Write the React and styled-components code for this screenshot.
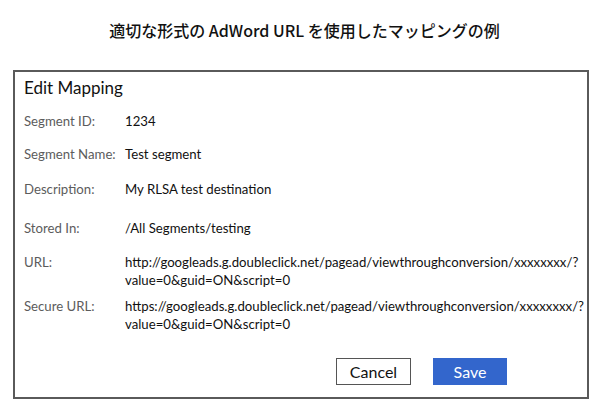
import styled, { createGlobalStyle } from "styled-components";

const GlobalStyle = createGlobalStyle`
	html, body {
		margin: 0;
		padding: 0;
		background: #fff;
	}
	body {
		font-family: Lato, "Noto Sans", "Noto Sans CJK JP", sans-serif;
		color: #1a1a1a;
	}
`;

const Page = styled.div`
	width: 605px;
	height: 414px;
	display: flex;
	flex-direction: column;
	align-items: flex-start;
`;

const Caption = styled.h1`
	align-self: stretch;
	margin: 19px 0 0;
	height: 22px;
	line-height: 22px;
	text-align: center;
	font-family: "Noto Sans CJK JP", "Noto Sans", sans-serif;
	font-weight: 500;
	font-size: 16px;
	color: #111;
	padding-left: 4px;
`;

const Dialog = styled.section`
	box-sizing: border-box;
	margin: 29px 0 0 13px;
	width: 576px;
	height: 329px;
	border: 2px solid #5a5a5a;
	padding: 5px 0 0 9px;
	display: flex;
	flex-direction: column;
`;

const Heading = styled.h2`
	margin: 0;
	height: 22px;
	line-height: 22px;
	font-size: 17px;
	font-weight: 400;
	color: #111;
`;

const Fields = styled.dl`
	margin: 13px 0 0;
	display: flex;
	flex-direction: column;
`;

const Row = styled.div`
	display: grid;
	grid-template-columns: 101px 1fr;
	margin-top: ${(p) => p.$gap || 0}px;
	line-height: 18px;
`;

const Label = styled.dt`
	font-size: 13.2px;
	color: #5c5c5c;
`;

const Value = styled.dd`
	margin: 0;
	font-size: 13.2px;
	color: #111;
	padding-right: 4px;
`;

const Actions = styled.div`
	margin-top: 25px;
	display: flex;
	justify-content: flex-end;
	gap: 22px;
	padding-right: 80px;
`;

const Button = styled.button`
	box-sizing: border-box;
	height: 27px;
	width: ${(p) => p.$width}px;
	font-family: inherit;
	font-size: 16px;
	padding: 0;
	cursor: pointer;
	border: ${(p) => (p.$primary ? "none" : "1px solid #555")};
	background: ${(p) => (p.$primary ? "#3366cc" : "#fff")};
	color: ${(p) => (p.$primary ? "#fff" : "#111")};
`;

const fields = [
	{ label: "Segment ID:", value: "1234", gap: 0 },
	{ label: "Segment Name:", value: "Test segment", gap: 15 },
	{ label: "Description:", value: "My RLSA test destination", gap: 17 },
	{ label: "Stored In:", value: "/All Segments/testing", gap: 21 },
	{
		label: "URL:",
		value: "http://googleads.g.doubleclick.net/pagead/viewthroughconversion/xxxxxxxx/?value=0&guid=ON&script=0",
		gap: 16
	},
	{
		label: "Secure URL:",
		value: "https://googleads.g.doubleclick.net/pagead/viewthroughconversion/xxxxxxxx/?value=0&guid=ON&script=0",
		gap: 8
	}
];

export default function App() {
	return (
		<Page>
			<GlobalStyle />
			<Caption>適切な形式の AdWord URL を使用したマッピングの例</Caption>
			<Dialog>
				<Heading>Edit Mapping</Heading>
				<Fields>
					{fields.map((f) => (
						<Row key={f.label} $gap={f.gap}>
							<Label>{f.label}</Label>
							<Value>{f.value}</Value>
						</Row>
					))}
				</Fields>
				<Actions>
					<Button $width={75}>Cancel</Button>
					<Button $primary $width={74}>Save</Button>
				</Actions>
			</Dialog>
		</Page>
	);
}
